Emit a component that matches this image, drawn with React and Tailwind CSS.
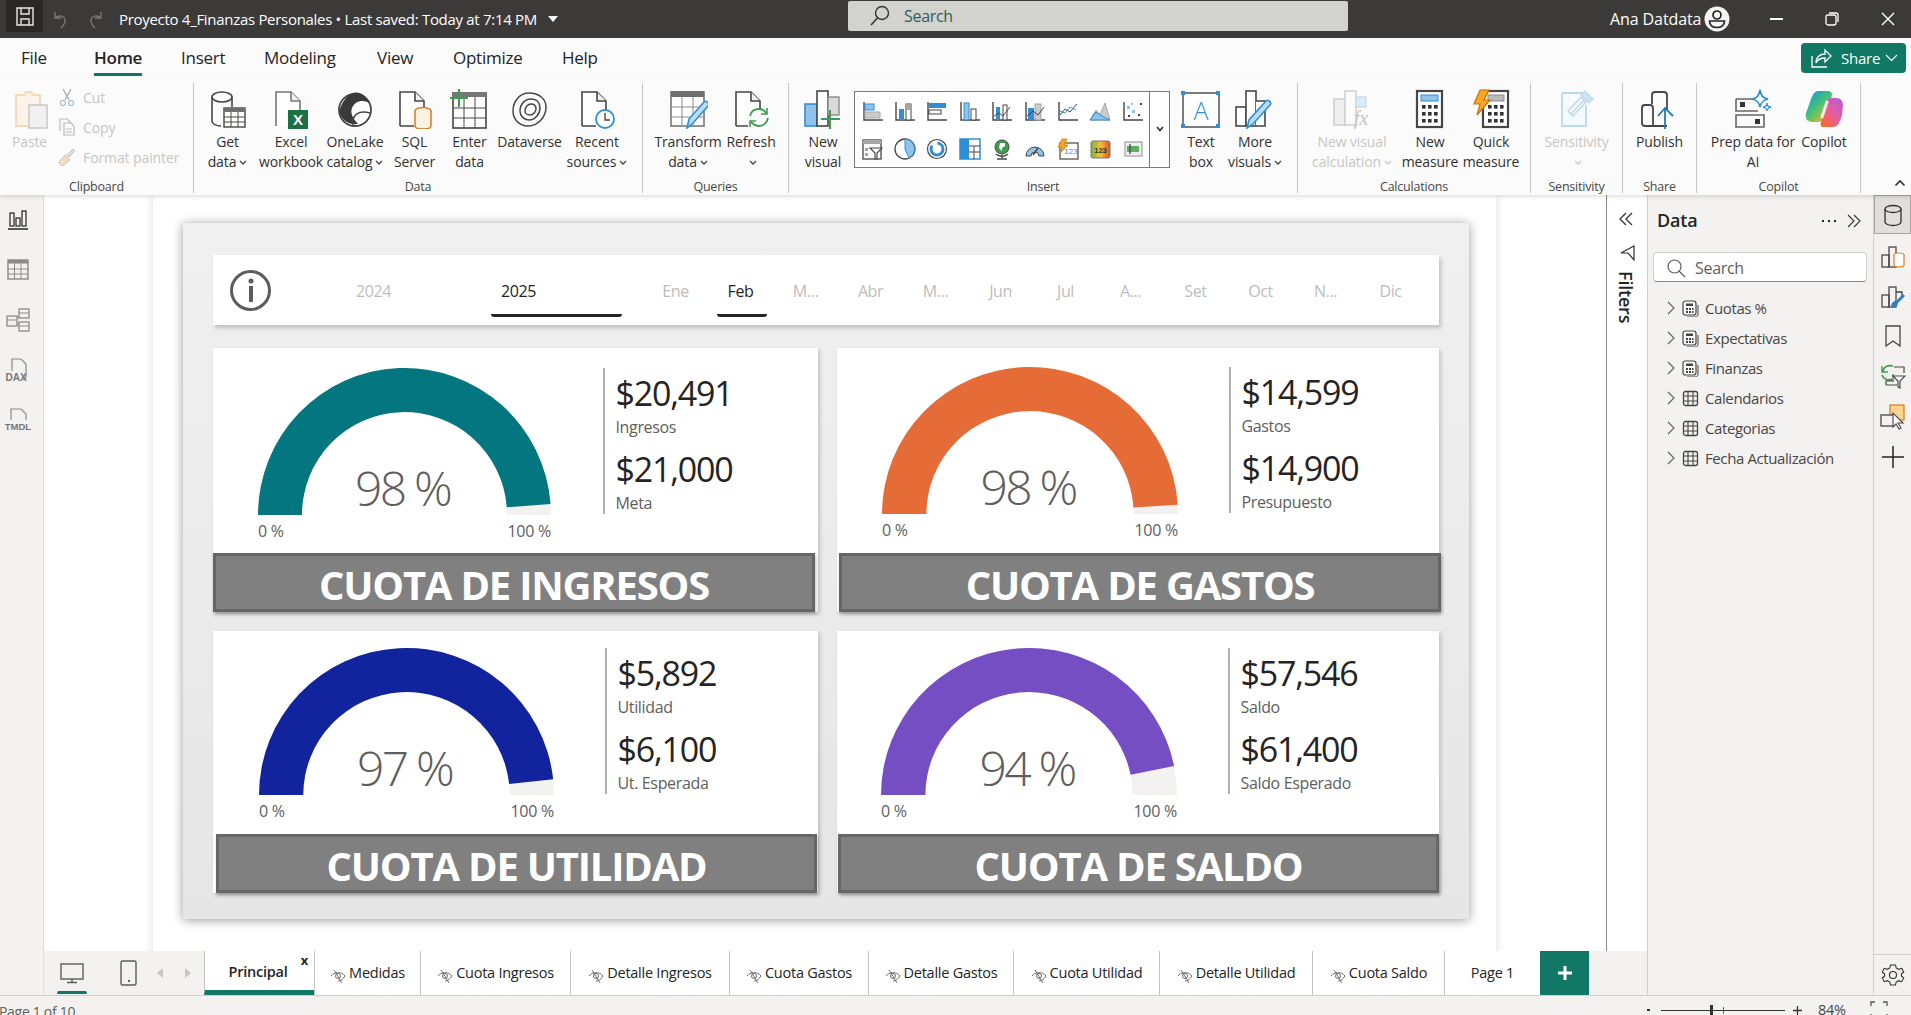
import React from "react";

const L = "#484644";
const B = "#2f8fd6";
const LB = "#8fc3ea";
const GR = "#a6a6a6";
const GN = "#3f9a52";
const O = "#d9822b";

const Svg = ({ s = 40, h, vb, className = "", children }) => (
  <svg width={s} height={h || s} viewBox={vb || `0 0 ${s} ${h || s}`} fill="none" className={`shrink-0 ${className}`}>
    {children}
  </svg>
);

const Doc = ({ c = L }) => <path d="M5 37V3h15l9 9v25" stroke={c} strokeWidth="1.6" fill="#fff" />;
const Fold = ({ c = L }) => <path d="M20 3v9h9" stroke={c} strokeWidth="1.6" fill="#f0f0f0" />;

const icons = {
  paste: (
    <Svg>
      <path d="M6 6h8l2-3h5l2 3h7v31H6z" stroke="#f5d9b8" strokeWidth="2" fill="#fbf4ea" />
      <rect x="19" y="16" width="18" height="23" fill="#f1f1f1" stroke="#c8c8c8" strokeWidth="1.5" />
    </Svg>
  ),
  getData: (
    <Svg>
      <ellipse cx="14" cy="8" rx="10" ry="5" stroke={L} strokeWidth="1.6" fill="#fff" />
      <path d="M4 8v24c0 3 4 5 9 5M24 8v10" stroke={L} strokeWidth="1.6" />
      <rect x="16" y="19" width="21" height="19" fill="#fff" stroke={L} strokeWidth="1.4" />
      <rect x="16" y="19" width="21" height="4" fill="#6e6e6e" />
      <path d="M23 23v15M30 23v15M16 28h21M16 33h21" stroke={L} strokeWidth="1" />
    </Svg>
  ),
  excel: (
    <Svg>
      <Doc c="#777" />
      <Fold c="#777" />
      <rect x="17" y="21" width="20" height="19" fill="#1d7044" />
      <text x="27" y="36" textAnchor="middle" fontSize="15" fontWeight="700" fill="#fff" fontFamily="Liberation Sans">X</text>
    </Svg>
  ),
  onelake: (
    <Svg>
      <circle cx="20" cy="21" r="16" stroke={L} strokeWidth="1.8" fill="#fff" />
      <path d="M11 9c7-9 18-7 24 5-8-4-15-2-18 5-2 5 1 11 6 16-9 1-15-3-18-10-1-6 2-11 6-16z" fill="#3a3a3a" />
      <path d="M18 36c-1-10 5-15 17-12" stroke={L} strokeWidth="1.5" />
    </Svg>
  ),
  sql: (
    <Svg>
      <path d="M5 37V3h15l9 9v8M5 37h14" stroke={L} strokeWidth="1.6" fill="#fff" />
      <Fold />
      <ellipse cx="28" cy="22" rx="8" ry="3.5" stroke={O} strokeWidth="1.6" fill="#fdf1e3" />
      <path d="M20 22v15c0 2 4 3 8 3s8-1 8-3V22" stroke={O} strokeWidth="1.6" fill="#fdf1e3" />
    </Svg>
  ),
  enter: (
    <Svg>
      <rect x="3" y="4" width="33" height="35" stroke={L} strokeWidth="1.6" fill="#fff" />
      <rect x="3" y="3" width="33" height="5" fill="#777" />
      <path d="M14 8v31M25 8v31M3 19h33M3 29h33" stroke={L} strokeWidth="1" />
      <path d="M9 0v18M0 9h18" stroke={GN} strokeWidth="2.2" />
    </Svg>
  ),
  dataverse: (
    <Svg>
      <path d="M3 22C3 12 10 4 19 4c10 0 17 6 17 14 0 10-8 19-18 19C9 37 3 30 3 22z" stroke={L} strokeWidth="1.5" />
      <path d="M10 22c0-7 5-12 11-12 6 0 9 4 9 9 0 6-5 12-11 12-5 0-9-4-9-9z" stroke={L} strokeWidth="1.5" />
      <path d="M15 22c0-4 3-7 6-7s5 2 5 5c0 3-3 6-6 6-3 0-5-2-5-4z" stroke={L} strokeWidth="1.5" />
    </Svg>
  ),
  recent: (
    <Svg>
      <path d="M5 37V3h15l9 9v10M5 37h14" stroke={L} strokeWidth="1.6" fill="#fff" />
      <Fold />
      <circle cx="28" cy="30" r="9" stroke={B} strokeWidth="1.8" fill="#fff" />
      <path d="M28 24v7h5" stroke={L} strokeWidth="1.4" />
    </Svg>
  ),
  transform: (
    <Svg>
      <rect x="3" y="3" width="33" height="34" stroke="#777" strokeWidth="1.6" fill="#fff" />
      <rect x="3" y="2" width="33" height="6" fill="#6e6e6e" />
      <path d="M14 8v29M25 8v29M3 18h33M3 28h33" stroke="#8a8a8a" strokeWidth="1" />
      <path d="M19 39l2-9 15-17c2-2 6 1 4 4L25 34z" fill="#bcdcf4" stroke={B} strokeWidth="1.6" />
    </Svg>
  ),
  refresh: (
    <Svg>
      <path d="M5 37V3h15l9 9v8M5 37h12" stroke={L} strokeWidth="1.6" fill="#fff" />
      <Fold />
      <path d="M19 27c1-5 5-7 9-7 3 0 6 2 7 4M37 29c-1 5-5 8-9 8-3 0-6-2-8-4" stroke={GN} strokeWidth="1.8" />
      <path d="M36 19v6h-6M19 38v-6h6" stroke={GN} strokeWidth="1.6" />
    </Svg>
  ),
  newVisual: (
    <Svg>
      <rect x="2" y="15" width="12" height="22" fill={LB} stroke={B} strokeWidth="1.6" />
      <rect x="14" y="2" width="11" height="35" fill="#fff" stroke={L} strokeWidth="1.6" />
      <rect x="25" y="8" width="11" height="18" fill="#d9d9d9" stroke="#8a8a8a" strokeWidth="1.4" />
      <path d="M27 21v19M18 30h19" stroke={GN} strokeWidth="2" />
    </Svg>
  ),
  textbox: (
    <Svg>
      <rect x="2" y="4" width="36" height="34" stroke={L} strokeWidth="1.4" fill="#fff" />
      {[[0, 2], [35, 2], [0, 35], [35, 35]].map(([x, y]) => (
        <rect key={x + "-" + y} x={x} y={y} width="4" height="4" fill={B} />
      ))}
      <text x="20" y="31" textAnchor="middle" fontSize="25" fill={B} fontFamily="Open Sans" fontWeight="300">A</text>
    </Svg>
  ),
  more: (
    <Svg>
      <rect x="1" y="18" width="10" height="19" fill="#fff" stroke={L} strokeWidth="1.6" />
      <rect x="11" y="2" width="10" height="35" fill="#fff" stroke={L} strokeWidth="1.6" />
      <path d="M21 12h9v25h-9" stroke={L} strokeWidth="1.6" fill="#fff" />
      <path d="M12 39l2-8 17-19c2-2 6 1 4 4L18 35z" fill="#bcdcf4" stroke={B} strokeWidth="1.6" />
    </Svg>
  ),
  calc: (
    <Svg>
      <rect x="2" y="10" width="11" height="26" fill="#efefef" stroke="#d0d0d0" strokeWidth="1.5" />
      <rect x="13" y="2" width="11" height="34" fill="#fbfbfb" stroke="#d0d0d0" strokeWidth="1.5" />
      <rect x="24" y="8" width="10" height="10" fill="#dcebf7" stroke="#c0d8ea" strokeWidth="1.2" />
      <text x="29" y="36" textAnchor="middle" fontSize="20" fontStyle="italic" fill="#c6c6c6" fontFamily="Liberation Serif">fx</text>
    </Svg>
  ),
  measure: (
    <Svg>
      <rect x="7" y="2" width="25" height="36" stroke={L} strokeWidth="2.2" fill="#fff" />
      <rect x="11" y="6" width="17" height="6" fill={LB} stroke={B} strokeWidth="1" />
      {[16, 23, 30].map((y) => [12, 18, 24].map((x) => <rect key={x + "" + y} x={x} y={y} width="3.6" height="3.6" fill="#333" />))}
    </Svg>
  ),
  quick: (
    <Svg>
      <rect x="12" y="2" width="25" height="36" stroke={L} strokeWidth="2.2" fill="#fff" />
      <rect x="17" y="6" width="16" height="6" fill="#bbb" stroke="#888" strokeWidth="1" />
      {[16, 23, 30].map((y) => [17, 23, 29].map((x) => <rect key={x + "" + y} x={x} y={y} width="3.6" height="3.6" fill="#333" />))}
      <path d="M9 1h9l-5 10h6L6 26l3-11H3z" fill="#f7a823" stroke="#c96f12" strokeWidth="1.2" />
    </Svg>
  ),
  sens: (
    <Svg>
      <path d="M5 4h22v-1M29 16v21H5V4" stroke="#bcd9ec" strokeWidth="1.8" fill="#f4f9fc" />
      <path d="M11 22L24 8l5 5-13 14z M14 25l13-14" stroke="#bcd9ec" strokeWidth="1.5" fill="#f4f9fc" />
      <path d="M24 6l4-4 8 8-4 4z" fill="#cfe4f2" stroke="#bcd9ec" strokeWidth="1.2" />
    </Svg>
  ),
  publish: (
    <Svg>
      <path d="M12 15V6c0-2 1-3 3-3h9c2 0 3 1 3 3v15M27 37H5c-2 0-3-1-3-3V19c0-2 1-3 3-3h5c2 0 3 1 3 3v18" stroke={L} strokeWidth="1.8" />
      <path d="M25 40V19M18 27l7-8 8 8" stroke="#2878b5" strokeWidth="1.8" />
    </Svg>
  ),
  prep: (
    <Svg>
      <path d="M3 10h20M3 10v12h22M3 26h28v12H3z" stroke="#666" strokeWidth="1.6" />
      <rect x="7" y="13" width="5" height="5" fill="#333" />
      <rect x="22" y="30" width="5" height="5" fill="#333" />
      <path d="M27 1c1 6 3 8 8 9-5 1-7 3-8 8-1-5-3-7-8-8 5-1 7-3 8-9z" stroke={B} strokeWidth="1.7" fill="#fff" />
      <path d="M34 14c0 3 1 4 4 4-3 1-4 2-4 4 0-2-1-3-4-4 3 0 4-1 4-4z" stroke={B} strokeWidth="1.3" fill="#fff" />
    </Svg>
  ),
  copilot: (
    <Svg>
      <defs>
        <linearGradient id="cpa" x1="0" y1="0" x2="0.8" y2="1">
          <stop offset="0" stopColor="#1a8fe3" />
          <stop offset="0.5" stopColor="#3fc27a" />
          <stop offset="1" stopColor="#f5b921" />
        </linearGradient>
        <linearGradient id="cpb" x1="1" y1="0" x2="0.2" y2="1">
          <stop offset="0" stopColor="#b05ce0" />
          <stop offset="0.55" stopColor="#e85c9e" />
          <stop offset="1" stopColor="#f46a32" />
        </linearGradient>
      </defs>
      <path d="M14 2h10c2 0 4 1 4 4l-5 20c-1 4-3 7-8 7H8C3 33 1 29 2 24l4-11c2-6 4-11 8-11z" fill="url(#cpa)" />
      <path d="M19 38h10c5 0 7-5 9-12l1-9c0-5-2-8-7-8h-5c-3 0-4 2-5 5l-5 19c-1 3 0 5 2 5z" fill="url(#cpb)" />
      <path d="M23 13l-5 15" stroke="#fff" strokeWidth="3" strokeLinecap="round" opacity="0.85" />
    </Svg>
  ),
};

const gallery = [
  <><path d="M3 2v18h19" stroke={L} strokeWidth="1.4" /><rect x="4" y="4" width="9" height="6" fill={LB} stroke={B} /><rect x="4" y="12" width="15" height="6" fill="#ccc" stroke={GR} /></>,
  <><path d="M2 2v18h19" stroke={L} strokeWidth="1.4" /><rect x="5" y="9" width="5" height="11" fill={B} /><rect x="12" y="4" width="5" height="16" fill="#fff" stroke={L} /><rect x="12" y="4" width="5" height="6" fill={GR} /></>,
  <><path d="M2 2v18h19" stroke={L} strokeWidth="1.4" /><rect x="3" y="3" width="17" height="5" fill={B} /><rect x="3" y="10" width="12" height="4" fill="#fff" stroke={L} /></>,
  <><path d="M2 2v18h19" stroke={L} strokeWidth="1.4" /><rect x="5" y="3" width="5" height="17" fill={LB} stroke={B} /><rect x="12" y="9" width="5" height="11" fill="#fff" stroke={L} /></>,
  <><path d="M2 2v18h19" stroke={L} strokeWidth="1.4" /><rect x="5" y="7" width="4" height="13" fill={B} /><rect x="12" y="5" width="4" height="15" fill="#fff" stroke={L} /><path d="M3 16l5-3 4 3 7-9" stroke={L} /></>,
  <><path d="M2 2v18h19" stroke={L} strokeWidth="1.4" /><rect x="4" y="8" width="6" height="12" fill={B} /><rect x="11" y="4" width="6" height="16" fill="#ccc" stroke={GR} /><path d="M3 16l6-5 5 4 6-8" stroke={L} /></>,
  <><path d="M2 2v18h19" stroke={L} strokeWidth="1.4" /><path d="M3 15l5-6 5 3 7-8" stroke={L} /><path d="M3 11l5 2 5-6 6 3" stroke={B} /></>,
  <><path d="M1 20l6-10 4 5 5-12 5 17z" fill="#ccc" stroke={GR} /><path d="M1 20l6-8 6 4 8 4z" fill={LB} stroke={B} /></>,
  <><path d="M2 2v18h19" stroke={L} strokeWidth="1.4" /><g fill={LB}><rect x="5" y="6" width="3" height="3" /><rect x="10" y="10" width="3" height="3" /><rect x="9" y="3" width="2" height="2" /></g><g fill={L}><rect x="6" y="15" width="2" height="2" /><rect x="18" y="3" width="2" height="2" /><rect x="16" y="14" width="2" height="2" /></g></>,
  <><rect x="2" y="2" width="18" height="19" stroke={L} strokeWidth="1.3" fill="#fff" /><rect x="2" y="2" width="18" height="4" fill={GR} /><path d="M9 10h12l-5 5v6h-2v-6z" fill="#fff" stroke={L} strokeWidth="1.2" /><rect x="4" y="10" width="3" height="3" fill={GR} /><rect x="4" y="15" width="3" height="3" fill={GR} /></>,
  <><circle cx="11" cy="11" r="10" stroke={L} strokeWidth="1.3" fill="#fff" /><path d="M11 11V1a10 10 0 0 1 4 19z" fill={LB} stroke={B} /></>,
  <><circle cx="11" cy="11" r="9.5" stroke={L} strokeWidth="1.2" fill="#fff" /><circle cx="11" cy="11" r="6" stroke={B} strokeWidth="3" strokeDasharray="22 6" /><circle cx="11" cy="11" r="3.5" fill="#fff" /></>,
  <><rect x="1" y="1" width="20" height="20" stroke={B} strokeWidth="1.5" fill="#fff" /><rect x="1" y="1" width="9" height="20" fill={B} /><path d="M10 8h11M15 8v13M10 14h11" stroke={L} /></>,
  <><circle cx="11" cy="9" r="7" fill="#3f9a52" stroke={L} /><path d="M9 5h5v3l-3 2v3l-3-3z" fill="#fff" /><path d="M5 16c3 3 9 3 12 0M11 17v3M6 21h10" stroke={L} strokeWidth="1.4" /></>,
  <><path d="M2 18a9 9 0 0 1 18 0h-5a4 4 0 0 0-8 0z" fill={LB} stroke={L} /><path d="M9 17l5-7" stroke={L} strokeWidth="1.6" /></>,
  <><rect x="3" y="5" width="18" height="16" fill="#fff" stroke={L} strokeWidth="1.2" /><path d="M5 1h5L7 7h4L3 15l2-6H1z" fill="#f7a823" stroke="#c96f12" strokeWidth="0.7" /><text x="14" y="16" textAnchor="middle" fontSize="8" fill={B} fontFamily="Liberation Sans">123</text></>,
  <><defs><linearGradient id="kpi" x1="0" x2="1"><stop offset="0" stopColor="#7cb342" /><stop offset="0.5" stopColor="#f2c037" /><stop offset="1" stopColor="#e0522e" /></linearGradient></defs><rect x="2" y="3" width="19" height="17" rx="2" fill="url(#kpi)" stroke="#777" /><text x="11.5" y="15" textAnchor="middle" fontSize="7.5" fontWeight="700" fill="#333" fontFamily="Liberation Sans">123</text></>,
  <><rect x="3" y="4" width="17" height="14" fill="#eee" stroke={GR} strokeWidth="1.3" /><rect x="5" y="8" width="12" height="6" fill="#5fae5f" /><path d="M8 6v10" stroke={L} strokeWidth="1.3" /></>,
];

const Chev = ({ c = L }) => (
  <svg width="8" height="6" viewBox="0 0 8 6" fill="none" className="inline-block ml-[3px] align-middle">
    <path d="M1 1l3 3 3-3" stroke={c} strokeWidth="1.3" />
  </svg>
);

const RibbonItem = ({ icon, lines, chev, muted, w }) => (
  <div className={`flex flex-col items-center pt-[6px] shrink-0 ${w}`}>
    {icons[icon]}
    <div className={`mt-[3px] text-[14px] leading-[20px] tracking-[-0.12px] text-center whitespace-nowrap ${muted ? "text-[#c8c6c4]" : "text-[#323130]"}`}>
      {lines.map((t, i) => (
        <div key={i} className="h-[20px]">
          {t}
          {chev && i === lines.length - 1 && <Chev c={muted ? "#c8c6c4" : L} />}
        </div>
      ))}
    </div>
  </div>
);

const Group = ({ label, w, children }) => (
  <div className={`flex flex-col h-[110px] border-r border-[#c8c6c4] shrink-0 ${w}`}>
    <div className="flex flex-1 min-h-0">{children}</div>
    <div className="h-[14px] translate-y-[1px] text-center text-[12.5px] leading-[14px] tracking-[-0.2px] text-[#484644]">{label}</div>
  </div>
);

const SmallAction = ({ label, children }) => (
  <div className="flex items-center h-[30px] gap-[7px] text-[14px] tracking-[-0.1px] text-[#c8c6c4] whitespace-nowrap">
    <span className="w-[18px] flex justify-center">{children}</span>
    {label}
  </div>
);

const Ribbon = () => (
  <div className="relative z-10 h-[119px] shrink-0 bg-[#fbfbfb] pt-[7px] flex shadow-[0_2px_4px_rgba(0,0,0,0.12)]">
    <Group label="Clipboard" w="w-[194px]">
      <div className="w-[58px] flex flex-col items-center pl-[1px] pt-[6px]">
        {icons.paste}
        <div className="mt-[3px] text-[14px] leading-[20px] tracking-[-0.12px] text-[#c8c6c4]">Paste</div>
      </div>
      <div className="flex flex-col -mt-[1px]">
        <SmallAction label="Cut">
          <Svg s={18}><path d="M5 1l6 11M13 1L7 12" stroke="#aaa" strokeWidth="1.3" /><circle cx="5" cy="15" r="2.5" stroke="#9bbad3" strokeWidth="1.2" /><circle cx="13" cy="15" r="2.5" stroke="#9bbad3" strokeWidth="1.2" /></Svg>
        </SmallAction>
        <SmallAction label="Copy">
          <Svg s={18}><path d="M2 13V1h7l3 3v1M6 17V5h7l3 3v9z" stroke="#bbb" strokeWidth="1.2" fill="#fafafa" /><path d="M8 11h6M8 14h6" stroke="#bbb" /></Svg>
        </SmallAction>
        <SmallAction label="Format painter">
          <Svg s={18}><path d="M1 14l6-7 5 5-6 5c-2 1-4 1-5-3z" fill="#f5dcc0" stroke="#c8c6c4" /><path d="M9 7l6-6 2 2-6 6z" fill="#ddd" stroke="#c8c6c4" /></Svg>
        </SmallAction>
      </div>
    </Group>
    <Group label="Data" w="w-[449px]">
      <div className="w-[2px]" />
      <RibbonItem w="w-[63px]" icon="getData" lines={["Get", "data"]} chev />
      <RibbonItem w="w-[64px]" icon="excel" lines={["Excel", "workbook"]} />
      <RibbonItem w="w-[64px]" icon="onelake" lines={["OneLake", "catalog"]} chev />
      <RibbonItem w="w-[55px]" icon="sql" lines={["SQL", "Server"]} />
      <RibbonItem w="w-[55px]" icon="enter" lines={["Enter", "data"]} />
      <RibbonItem w="w-[65px]" icon="dataverse" lines={["Dataverse"]} />
      <RibbonItem w="w-[70px]" icon="recent" lines={["Recent", "sources"]} chev />
    </Group>
    <Group label="Queries" w="w-[146px]">
      <RibbonItem w="w-[90px]" icon="transform" lines={["Transform", "data"]} chev />
      <RibbonItem w="w-[36px]" icon="refresh" lines={["Refresh", ""]} chev />
    </Group>
    <Group label="Insert" w="w-[509px]">
      <div className="w-[3px]" />
      <RibbonItem w="w-[62px]" icon="newVisual" lines={["New", "visual"]} />
      <div className="mt-[8px] flex h-[77px] w-[316px] shrink-0 border border-[#7a7a7a] bg-white">
        <div className="grid flex-1 grid-cols-9 content-center gap-y-[16px] pl-[1px]">
          {gallery.map((g, i) => (
            <div key={i} className="flex justify-center">
              <Svg s={22}>{g}</Svg>
            </div>
          ))}
        </div>
        <div className="flex w-[20px] items-center justify-center border-l border-[#7a7a7a]">
          <svg width="10" height="7" viewBox="0 0 10 7" fill="none"><path d="M2 1l3 3.5L8 1" stroke="#333" strokeWidth="1.7" /></svg>
        </div>
      </div>
      <RibbonItem w="w-[62px]" icon="textbox" lines={["Text", "box"]} />
      <RibbonItem w="w-[46px]" icon="more" lines={["More", "visuals"]} chev />
    </Group>
    <Group label="Calculations" w="w-[233px]">
      <RibbonItem w="w-[108px]" icon="calc" lines={["New visual", "calculation"]} chev muted />
      <RibbonItem w="w-[48px]" icon="measure" lines={["New", "measure"]} />
      <RibbonItem w="w-[74px]" icon="quick" lines={["Quick", "measure"]} />
    </Group>
    <Group label="Sensitivity" w="w-[92px]">
      <RibbonItem w="w-[91px]" icon="sens" lines={["Sensitivity", ""]} chev muted />
    </Group>
    <Group label="Share" w="w-[74px]">
      <RibbonItem w="w-[73px]" icon="publish" lines={["Publish"]} />
    </Group>
    <Group label="Copilot" w="w-[164px]">
      <RibbonItem w="w-[112px]" icon="prep" lines={["Prep data for", "AI"]} />
      <RibbonItem w="w-[30px]" icon="copilot" lines={["Copilot"]} />
    </Group>
    <div className="flex flex-1 items-end justify-end pb-[8px] pr-[5px]">
      <svg width="12" height="8" viewBox="0 0 12 8" fill="none"><path d="M1.5 6.5L6 2l4.5 4.5" stroke="#333" strokeWidth="1.7" /></svg>
    </div>
  </div>
);

const TitleBar = () => (
  <div className="h-[38px] shrink-0 bg-[#3b3a39] flex items-center text-white">
    <div className="ml-[6px] flex h-[32px] w-[37px] items-center justify-center self-start bg-[#292827]">
      <Svg s={22}>
        <path d="M3 3h16v17H3z M7 3v6h8V3 M7 20v-6h8v6" stroke="#e8e8e8" strokeWidth="1.4" />
      </Svg>
    </div>
    <div className="ml-[7px] flex w-[68px] gap-[16px]">
      <Svg s={20}><path d="M5 3v6h6M5 9c3-3 10-3 10 3 0 3-2 5-4 7" stroke="#777" strokeWidth="1.4" /></Svg>
      <Svg s={20}><path d="M15 3v6H9M15 9c-3-3-10-3-10 3 0 3 2 5 4 7" stroke="#777" strokeWidth="1.4" /></Svg>
    </div>
    <div className="ml-[1px] flex w-[729px] items-center text-[15px] tracking-[-0.3px] whitespace-nowrap">
      Proyecto 4_Finanzas Personales&nbsp;•&nbsp;Last saved: Today at 7:14 PM
      <svg width="12" height="7" viewBox="0 0 12 7" className="ml-[10px]"><path d="M1 0h10L6 6z" fill="#fff" /></svg>
    </div>
    <div className="flex h-[30px] w-[500px] items-center self-start mt-[1px] rounded-[2px] bg-[#d2d2cf] pl-[20px] text-[#2d5f58]">
      <Svg s={24}><circle cx="14" cy="9" r="6.5" stroke="#333" strokeWidth="1.4" /><path d="M9.5 14L3 21" stroke="#333" strokeWidth="1.6" /></Svg>
      <span className="ml-[12px] text-[16px] tracking-[-0.3px]">Search</span>
    </div>
    <div className="ml-[262px] w-[94px] text-[16px] tracking-[-0.1px] whitespace-nowrap">Ana Datdata</div>
    <Svg s={26}>
      <circle cx="13" cy="13" r="12.5" fill="#f4f4f4" />
      <circle cx="13" cy="9" r="4" stroke="#222" strokeWidth="1.7" />
      <path d="M5.5 15h15c0 4-3 6.5-7.5 6.5S5.5 19 5.5 15z" stroke="#222" strokeWidth="1.7" />
    </Svg>
    <div className="ml-[40px] h-[1.5px] w-[13px] bg-white" />
    <Svg s={16} className="ml-[41px]"><rect x="2" y="4" width="10" height="10" rx="2" stroke="#fff" strokeWidth="1.3" /><path d="M5 2h7c1.5 0 2 .5 2 2v7" stroke="#fff" strokeWidth="1.3" /></Svg>
    <Svg s={16} className="ml-[40px]"><path d="M2 2l12 12M14 2L2 14" stroke="#fff" strokeWidth="1.4" /></Svg>
  </div>
);

const tabs = [
  ["File", "w-[73px]", false],
  ["Home", "w-[87px]", true],
  ["Insert", "w-[83px]", false],
  ["Modeling", "w-[113px]", false],
  ["View", "w-[76px]", false],
  ["Optimize", "w-[109px]", false],
  ["Help", "w-[50px]", false],
];

const TabRow = () => (
  <div className="h-[38px] shrink-0 bg-[#fbfbfb] flex pl-[21px] text-[17px] tracking-[-0.25px] text-[#252423]">
    {tabs.map(([t, w, active]) => (
      <div key={t} className={`${w} shrink-0 flex items-start pt-[9px] leading-[22px]`}>
        <span className={`h-[29px] ${active ? "font-semibold border-b-[3px] border-[#117865]" : ""}`}>{t}</span>
      </div>
    ))}
    <div className="ml-auto mr-[5px] mt-[5px] flex h-[30px] w-[105px] items-center rounded-[4px] bg-[#117865] pl-[9px] text-[15px] text-white">
      <Svg s={22}>
        <path d="M2 9v11h15" stroke="#fff" strokeWidth="1.3" />
        <path d="M6 16c0-6 4-9 9-9V3l6 6-6 6v-4c-4 0-7 1-9 5z" stroke="#fff" strokeWidth="1.3" />
      </Svg>
      <span className="ml-[9px]">Share</span>
      <svg width="13" height="8" viewBox="0 0 13 8" fill="none" className="ml-[5px]"><path d="M1 1l5.5 5.5L12 1" stroke="#fff" strokeWidth="1.2" /></svg>
    </div>
  </div>
);

const RailCell = ({ children }) => <div className="flex h-[50px] items-center justify-center">{children}</div>;

const LeftRail = () => (
  <div className="w-[44px] shrink-0 border-r border-[#e1dfdd] bg-[#f3f2f1] flex flex-col items-center pr-[7px]">
    <RailCell><Svg s={22}><rect x="3" y="4" width="4" height="13" stroke="#222" strokeWidth="1.2" /><rect x="9" y="9" width="4" height="8" stroke="#222" strokeWidth="1.2" /><rect x="15" y="2" width="4" height="15" stroke="#222" strokeWidth="1.2" /><path d="M1 20h20" stroke="#222" strokeWidth="1.5" /></Svg></RailCell>
    <RailCell><Svg s={28} h={30}><rect x="4" y="5" width="20" height="19" stroke="#8a8a8a" strokeWidth="1.4" /><rect x="4" y="5" width="20" height="3.5" fill="#8a8a8a" /><path d="M10.5 8v16M17 8v16M4 14h20M4 19h20" stroke="#8a8a8a" /></Svg></RailCell>
    <RailCell><Svg s={26}><rect x="2" y="9" width="10" height="10" stroke="#8a8a8a" strokeWidth="1.3" /><rect x="14" y="2" width="10" height="9" stroke="#8a8a8a" strokeWidth="1.3" /><rect x="14" y="15" width="10" height="9" stroke="#8a8a8a" strokeWidth="1.3" /><path d="M2 13h10M14 6h10M14 19h10M12 10h2M12 17h2" stroke="#8a8a8a" /></Svg></RailCell>
    <RailCell><Svg s={28}><path d="M8 15V3h9l5 5v9M22 17c1 3 0 6-3 7" stroke="#8a8a8a" strokeWidth="1.2" /><text x="12" y="25" textAnchor="middle" fontSize="10" fontWeight="700" fill="#777" fontFamily="Liberation Sans">DAX</text></Svg></RailCell>
    <RailCell><Svg s={30}><path d="M8 15V4h10l5 5v6" stroke="#8a8a8a" strokeWidth="1.2" /><text x="15" y="25" textAnchor="middle" fontSize="9.5" fontWeight="700" fill="#777" fontFamily="Liberation Sans">TMDL</text></Svg></RailCell>
  </div>
);

const Gauge = ({ p, color, label, cls }) => {
  const a = Math.PI * (1 - p);
  const x1 = 100 + 100 * Math.cos(a);
  const y1 = 100 - 100 * Math.sin(a);
  const x2 = 100 + 70 * Math.cos(a);
  const y2 = 100 - 70 * Math.sin(a);
  return (
    <div className={`shrink-0 ${cls}`}>
      <div className="relative h-[147px] w-full">
        <svg viewBox="0 0 200 100" preserveAspectRatio="none" className="block h-full w-full">
          <path d="M0 100A100 100 0 0 1 200 100H170A70 70 0 0 0 30 100Z" fill="#f3f2f1" />
          <path d={`M0 100A100 100 0 0 1 ${x1} ${y1}L${x2} ${y2}A70 70 0 0 0 30 100Z`} fill={color} />
        </svg>
        <div className="absolute -left-[2px] right-[2px] bottom-[4px] h-[46px] text-center text-[48px] font-light leading-[46px] tracking-[-2.8px] text-[#605e5c]">{label}</div>
      </div>
      <div className="mt-[6px] flex justify-between text-[16px] leading-[20px] tracking-[-0.25px] text-[#605e5c]">
        <span>0 %</span>
        <span>100 %</span>
      </div>
    </div>
  );
};

const Value = ({ v, l, cls = "" }) => (
  <div className={cls}>
    <div className="h-[52px] text-[34px] leading-[52px] tracking-[-1.2px] text-[#252423]">{v}</div>
    <div className="h-[16px] text-[16px] leading-[16px] tracking-[-0.35px] text-[#605e5c] whitespace-nowrap">{l}</div>
  </div>
);

const cards = [
  { t: "CUOTA DE INGRESOS", c: "#047680", p: 0.976, lb: "98 %", v1: "$20,491", l1: "Ingresos", v2: "$21,000", l2: "Meta", top: "pt-[19px] pl-[45px]", g: "w-[293px] mt-[1px]", ln: "ml-[52px]", bar: "w-[602px]" },
  { t: "CUOTA DE GASTOS", c: "#e66c37", p: 0.98, lb: "98 %", v1: "$14,599", l1: "Gastos", v2: "$14,900", l2: "Presupuesto", top: "pt-[18px] pl-[45px]", g: "w-[296px] mt-[1px]", ln: "ml-[51px]", bar: "w-[602px] ml-[2px]" },
  { t: "CUOTA DE UTILIDAD", c: "#12239e", p: 0.966, lb: "97 %", v1: "$5,892", l1: "Utilidad", v2: "$6,100", l2: "Ut. Esperada", top: "pt-[16px] pl-[46px]", g: "w-[295px] mt-[1px]", ln: "ml-[51px]", bar: "w-[601px] ml-[3px]" },
  { t: "CUOTA DE SALDO", c: "#744ec2", p: 0.937, lb: "94 %", v1: "$57,546", l1: "Saldo", v2: "$61,400", l2: "Saldo Esperado", top: "pt-[16px] pl-[44px]", g: "w-[296px] mt-[1px]", ln: "ml-[51px]", bar: "w-[601px] ml-[1px]" },
];

const Card = ({ d, className }) => (
  <div className={`flex flex-col bg-white shadow-[2px_2px_4px_rgba(0,0,0,0.18)] ${className}`}>
    <div className={`flex ${d.top}`}>
      <Gauge p={d.p} color={d.c} label={d.lb} cls={d.g} />
      <div className={`${d.ln} mt-[1px] h-[146px] w-[1.5px] shrink-0 bg-[#b3b0ad]`} />
      <div className="pl-[11px]">
        <Value v={d.v1} l={d.l1} />
        <Value v={d.v2} l={d.l2} cls="mt-[8px]" />
      </div>
    </div>
    <div className={`mt-auto flex h-[59px] shrink-0 items-center justify-center border-[3px] border-[#666666] bg-[#808080] pt-[4px] text-[40px] font-bold leading-none tracking-[-1.2px] text-white shadow-[1px_2px_3px_rgba(0,0,0,0.25)] ${d.bar}`}>
      {d.t}
    </div>
  </div>
);

const months = ["Ene", "Feb", "M...", "Abr", "M...", "Jun", "Jul", "A...", "Set", "Oct", "N...", "Dic"];

const Slicer = () => (
  <div className="flex h-[70px] items-center bg-white text-[16px] tracking-[-0.4px] text-[#bdbdbd] shadow-[2px_3px_4px_rgba(0,0,0,0.2)]">
    <div className="ml-[17px] flex h-[41px] w-[41px] shrink-0 items-center justify-center rounded-full border-[3.5px] border-[#5c5c5c]">
      <svg width="6" height="24" viewBox="0 0 6 24"><circle cx="3" cy="3" r="2.5" fill="#5c5c5c" /><rect x="1" y="8" width="4" height="16" fill="#5c5c5c" /></svg>
    </div>
    <div className="ml-[85px] w-[135px] shrink-0 pt-[2px]">2024</div>
    <div className="relative flex h-full w-[152px] shrink-0 items-center pl-[10px] pt-[2px] text-[#252423]">
      2025
      <div className="absolute bottom-[8px] left-0 h-[3px] w-[131px] rounded-b-[3px] bg-[#252423]" />
    </div>
    <div className="grid h-full grid-cols-12">
      {months.map((m, i) => (
        <div key={i} className={`relative flex w-[65px] items-center justify-center pt-[2px] ${i === 1 ? "text-[#252423]" : ""}`}>
          {m}
          {i === 1 && <div className="absolute bottom-[8px] left-[9px] h-[3px] w-[50px] rounded-b-[3px] bg-[#252423]" />}
        </div>
      ))}
    </div>
  </div>
);

const Canvas = () => (
  <div className="flex-1 min-w-0 bg-white pl-[109px] overflow-hidden">
    <div className="h-[800px] w-[1343px] bg-white pl-[30px] pt-[28px] shadow-[0_0_9px_rgba(0,0,0,0.14)]">
      <div className="h-[696px] w-[1286px] bg-gradient-to-b from-[#f0f0f0] to-[#e6e6e6] pl-[30px] pt-[32px] shadow-[0_1px_10px_rgba(0,0,0,0.4)]">
        <div className="w-[1226px]">
          <Slicer />
          <div className="mt-[23px] grid grid-cols-[605px_602px] gap-x-[19px] gap-y-[19px]">
            <Card d={cards[0]} className="h-[264px]" />
            <Card d={cards[1]} className="h-[264px]" />
            <Card d={cards[2]} className="h-[262px]" />
            <Card d={cards[3]} className="h-[262px]" />
          </div>
        </div>
      </div>
    </div>
  </div>
);

const FiltersPane = () => (
  <div className="w-[41px] shrink-0 border-l border-[#8a8886] bg-white flex flex-col items-center pt-[16px] pr-[2px]">
    <Svg s={16}><path d="M8 2L2 8l6 6M14 2L8 8l6 6" stroke="#323130" strokeWidth="1.3" /></Svg>
    <Svg s={18} className="mt-[17px] ml-[4px]"><path d="M15 2v14L9 9H2z" stroke="#323130" strokeWidth="1.2" /></Svg>
    <div className="mt-[9px] text-[18px] font-semibold leading-none tracking-[-0.2px] text-[#252423] [writing-mode:vertical-rl]">Filters</div>
  </div>
);

const pageTabs = [
  ["Medidas", "w-[106px]"],
  ["Cuota Ingresos", "w-[150px]"],
  ["Detalle Ingresos", "w-[159px]"],
  ["Cuota Gastos", "w-[139px]"],
  ["Detalle Gastos", "w-[145px]"],
  ["Cuota Utilidad", "w-[146px]"],
  ["Detalle Utilidad", "w-[153px]"],
  ["Cuota Saldo", "w-[132px]"],
];

const Hidden = () => (
  <Svg s={16} className="mr-[3px] mt-[5px]">
    <path d="M1 8c3-4 10-5 14 0-2 3-4 5-7 5" stroke="#605e5c" strokeWidth="0.9" />
    <circle cx="8" cy="8" r="2.5" stroke="#605e5c" strokeWidth="0.9" />
    <path d="M4 2l8 13" stroke="#605e5c" strokeWidth="0.9" />
  </Svg>
);

const PageTabs = () => (
  <div className="h-[44px] shrink-0 flex bg-[#f3f2f1] text-[14.5px] tracking-[-0.25px] text-[#252423]">
    <div className="w-[160px] shrink-0 flex items-center pl-[13px]">
      <div className="relative w-[30px] flex justify-center">
        <Svg s={26}><rect x="2" y="4" width="22" height="15" stroke="#5c5c5c" strokeWidth="1.4" /><path d="M13 19v3M8 22.5h10" stroke="#5c5c5c" strokeWidth="1.4" /></Svg>
        <div className="absolute -bottom-[8px] left-0 h-[3px] w-[30px] rounded-[2px] bg-[#117865]" />
      </div>
      <Svg s={26} className="ml-[29px]"><rect x="5" y="1" width="15" height="24" rx="1.5" stroke="#5c5c5c" strokeWidth="1.4" /><rect x="12" y="20" width="2" height="2" fill="#5c5c5c" /></Svg>
      <svg width="8" height="12" viewBox="0 0 8 12" className="ml-[14px]"><path d="M7 1v10L1 6z" fill="#c8c6c4" /></svg>
      <svg width="8" height="12" viewBox="0 0 8 12" className="ml-[20px]"><path d="M1 1v10l6-5z" fill="#c8c6c4" /></svg>
    </div>
    <div className="relative w-[110px] shrink-0 border-l border-[#c8c6c4] border-b-[5px] border-b-[#117865] bg-white flex items-center justify-center pb-[2px] font-semibold">
      <span className="-ml-[3px] mt-[5px]">Principal</span>
      <span className="absolute right-[6px] top-[3px] text-[13px] font-bold leading-none">x</span>
    </div>
    {pageTabs.map(([t, w]) => (
      <div key={t} className={`${w} shrink-0 border-l border-[#c8c6c4] bg-white flex items-center justify-center whitespace-nowrap`}>
        <Hidden />
        <span>{t}</span>
      </div>
    ))}
    <div className="w-[96px] shrink-0 border-l border-[#c8c6c4] bg-white flex items-center justify-center">Page 1</div>
    <div className="w-[49px] shrink-0 bg-[#117865] flex items-center justify-center">
      <svg width="16" height="16" viewBox="0 0 16 16"><path d="M6.5 1h3v5.5H15v3H9.5V15h-3V9.5H1v-3h5.5z" fill="#fff" /></svg>
    </div>
  </div>
);

const TableIcon = ({ kind }) =>
  kind === "calc" ? (
    <Svg s={17}>
      <rect x="1" y="1" width="13" height="14" rx="2.5" stroke="#444" strokeWidth="1.2" fill="#fff" />
      <path d="M16 5v9c0 2-1 3-3 3H5" stroke="#444" strokeWidth="1" />
      <rect x="4" y="3.5" width="7" height="2.5" fill="#444" />
      <g fill="#444">
        <rect x="4" y="8" width="2" height="2" /><rect x="7" y="8" width="2" height="2" /><rect x="10" y="8" width="1.5" height="2" />
        <rect x="4" y="11" width="2" height="2" /><rect x="7" y="11" width="2" height="2" /><rect x="10" y="11" width="1.5" height="2" />
      </g>
    </Svg>
  ) : (
    <Svg s={17}>
      <rect x="1.5" y="1.5" width="14" height="14" rx="2" stroke="#444" strokeWidth="1.3" />
      <path d="M6 1.5v14M11 1.5v14M1.5 6h14M1.5 11h14" stroke="#444" strokeWidth="1.1" />
    </Svg>
  );

const fields = [
  ["Cuotas %", "calc"],
  ["Expectativas", "calc"],
  ["Finanzas", "calc"],
  ["Calendarios", "t"],
  ["Categorias", "t"],
  ["Fecha Actualización", "t"],
];

const DataPane = () => (
  <div className="w-[226px] shrink-0 border-l border-[#d2d0ce] bg-[#f3f2f1] pl-[5px] pr-[5px]">
    <div className="flex h-[50px] items-center pl-[4px] pt-[1px] pr-[6px]">
      <span className="text-[18px] font-semibold text-[#252423] tracking-[-0.2px]">Data</span>
      <span className="ml-auto flex gap-[4px]">
        <i className="h-[2px] w-[2px] bg-[#252423]" /><i className="h-[2px] w-[2px] bg-[#252423]" /><i className="h-[2px] w-[2px] bg-[#252423]" />
      </span>
      <Svg s={16} className="ml-[10px]"><path d="M2 2l6 6-6 6M8 2l6 6-6 6" stroke="#323130" strokeWidth="1.1" /></Svg>
    </div>
    <div className="mt-[7px] flex h-[30px] w-[214px] items-center rounded-[4px] border border-[#d2d0ce] border-b-[#8a8886] bg-white pl-[12px] pt-[1px] text-[16px] tracking-[-0.3px] text-[#605e5c]">
      <Svg s={20}><circle cx="8.5" cy="8.5" r="6.5" stroke="#605e5c" strokeWidth="1.2" /><path d="M13 13l6 6" stroke="#605e5c" strokeWidth="1.2" /></Svg>
      <span className="ml-[9px]">Search</span>
    </div>
    <div className="mt-[11px] flex flex-col">
      {fields.map(([t, k]) => (
        <div key={t} className="flex h-[30px] items-center pl-[13px] text-[15px] tracking-[-0.4px] text-[#484644] whitespace-nowrap">
          <svg width="10" height="16" viewBox="0 0 10 16" fill="none"><path d="M2 2l6 6-6 6" stroke="#605e5c" strokeWidth="1.1" /></svg>
          <span className="ml-[6px]"><TableIcon kind={k} /></span>
          <span className="ml-[6px]">{t}</span>
        </div>
      ))}
    </div>
  </div>
);

const RightRail = () => (
  <div className="w-[38px] shrink-0 border-l border-[#d2d0ce] bg-[#f3f2f1] flex flex-col items-center">
    <div className="flex h-[39px] w-full items-center justify-center bg-[#e1dfdd] border border-[#a8a6a4]">
      <Svg s={24}><ellipse cx="12" cy="6" rx="8" ry="3.5" stroke="#323130" strokeWidth="1.3" /><path d="M4 6v13c0 2 4 3.5 8 3.5s8-1.500 8-3.500V6" stroke="#323130" strokeWidth="1.3" /></Svg>
    </div>
    <div className="mt-[10px] flex flex-col items-center gap-[15px]">
      <Svg s={25}><rect x="2" y="11" width="7" height="12" stroke={L} strokeWidth="1.3" /><rect x="9" y="3" width="7" height="20" stroke={L} strokeWidth="1.3" /><ellipse cx="19" cy="11" rx="5" ry="2" stroke={O} strokeWidth="1.2" fill="#fff" /><path d="M14 11v10c0 1 2 2 5 2s5-1 5-2V11" stroke={O} strokeWidth="1.2" fill="#fff" /></Svg>
      <Svg s={25}><rect x="2" y="11" width="7" height="12" stroke={L} strokeWidth="1.3" /><rect x="9" y="3" width="7" height="20" stroke={L} strokeWidth="1.3" /><path d="M16 8h6v5" stroke={L} strokeWidth="1.3" /><path d="M11 24c0-5 2-7 5-7l7-7 2 2-7 7c0 3-3 5-7 5z" fill="#2f7fc4" /></Svg>
      <Svg s={24}><path d="M5 2h14v20l-7-5-7 5z" stroke={L} strokeWidth="1.3" /></Svg>
      <Svg s={26}><path d="M13 3c-4-1-9 0-10 5M2 12c1 4 6 6 10 4" stroke={GN} strokeWidth="1.7" /><path d="M2 3v6h6M13 11v6H8" stroke={GN} strokeWidth="1.4" /><path d="M14 4h10v6M6 22v-4h8M6 22h11" stroke={L} strokeWidth="1.2" /><path d="M13 13h12l-5 5v7l-2-1v-6z" stroke={L} strokeWidth="1.2" fill="#fff" /></Svg>
      <Svg s={26}><rect x="10" y="1" width="14" height="15" fill="#fbd58e" stroke="#d9822b" strokeWidth="1.3" /><rect x="1" y="11" width="13" height="11" stroke={L} strokeWidth="1.3" fill="#f3f2f1" /><path d="M13 9v14l3-3 3 5 2-1-3-5h5z" fill="#fff" stroke={L} strokeWidth="1.1" /></Svg>
      <Svg s={24}><path d="M12 1v22M1 12h22" stroke="#252423" strokeWidth="1.5" /></Svg>
    </div>
    <div className="mt-auto w-full border-t border-[#d2d0ce] h-[41px] flex items-center justify-center">
      <Svg s={24}>
        <path d="M9.5 2h5l.7 3 2.5 1.300 3-1 2 3.700-2.300 2v2l2.300 2-2 3.700-3-1-2.500 1.300-.7 3h-5l-.7-3-2.500-1.300-3 1-2-3.700 2.300-2v-2L1.300 9l2-3.700 3 1L8.800 5z" stroke="#323130" strokeWidth="1.1" />
        <circle cx="12" cy="12" r="3.5" stroke="#323130" strokeWidth="1.1" />
      </Svg>
    </div>
  </div>
);

const StatusBar = () => (
  <div className="h-[20px] shrink-0 border-t border-[#d2d0ce] bg-[#f3f2f1] overflow-hidden flex text-[14px] tracking-[-0.3px] text-[#605e5c]">
    <div className="-ml-[1px] pt-[6px] leading-[20px]">Page 1 of 10</div>
    <div className="ml-auto mr-[23px] flex h-[20px] items-center pt-[8px] text-[14.5px] text-[#484644]">
      <div className="h-[2px] w-[3px] -ml-[3px] bg-[#333]" />
      <div className="relative ml-[11px] h-[1px] w-[124px] bg-[#333]">
        <div className="absolute left-[49px] -top-[5px] h-[11px] w-[3px] bg-[#333]" />
        <div className="absolute left-[62px] -top-[3px] h-[7px] w-[1px] bg-[#666]" />
      </div>
      <svg width="9" height="9" viewBox="0 0 9 9" className="ml-[8px]"><path d="M4.5 0v9M0 4.500h9" stroke="#333" strokeWidth="1.3" /></svg>
      <span className="ml-[16px] w-[33px]">84%</span>
      <Svg s={18} className="ml-[19px]"><path d="M1 5V1h4M13 1h4v4M17 13v4h-4M5 17H1v-4" stroke="#555" strokeWidth="1.3" /></Svg>
    </div>
  </div>
);

export default function App() {
  return (
    <div className="flex h-[1015px] w-[1911px] flex-col overflow-hidden bg-white font-['Open_Sans',sans-serif]">
      <TitleBar />
      <TabRow />
      <Ribbon />
      <div className="flex h-[800px] shrink-0">
        <LeftRail />
        <div className="flex w-[1603px] shrink-0 flex-col">
          <div className="flex h-[756px] shrink-0">
            <Canvas />
            <FiltersPane />
          </div>
          <PageTabs />
        </div>
        <DataPane />
        <RightRail />
      </div>
      <StatusBar />
    </div>
  );
}
